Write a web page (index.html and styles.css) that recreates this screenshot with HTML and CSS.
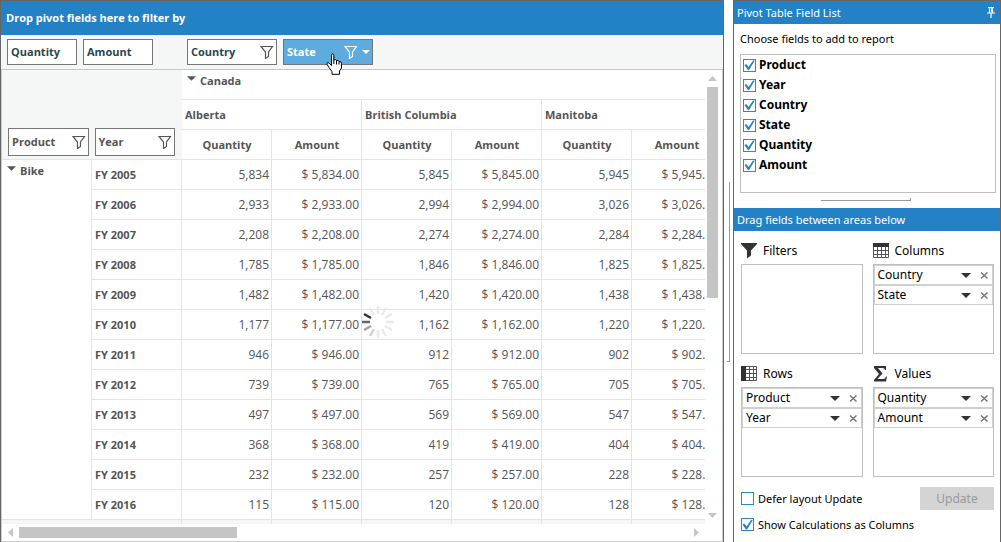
FILE: index.html
```html
<!DOCTYPE html>
<html lang="en">
<head>
<meta charset="utf-8">
<title>Pivot Table</title>
<link rel="stylesheet" href="styles.css">
</head>
<body>
<svg class="defs" aria-hidden="true">
  <symbol id="i-filter" viewBox="0 0 14 14"><path d="M1 1.500h11.500L8.500 7v4.500L5.500 13.500V7z" fill="none" stroke="currentColor" stroke-width="1.200"/></symbol>
  <symbol id="i-x" viewBox="0 0 9 9"><path d="M1 1.500L7.500 7.500M7.500 1.500L1 7.500" fill="none" stroke="currentColor" stroke-width="1.500"/></symbol>
  <symbol id="i-down" viewBox="0 0 10 5"><path d="M0 0h10L5 5z" fill="currentColor"/></symbol>
</svg>
<main class="app">
  <section class="pivot">
    <h1 class="filter-bar">Drop pivot fields here to filter by</h1>
    <div class="field-bar">
      <div class="chips values">
        <button class="chip small">Quantity</button>
        <button class="chip small">Amount</button>
      </div>
      <div class="chips">
        <button class="chip wide">Country<svg class="funnel"><use href="#i-filter"/></svg></button>
        <button class="chip wide active">State<svg class="funnel"><use href="#i-filter"/></svg><svg class="caret"><use href="#i-down"/></svg></button>
      </div>
      <svg class="cursor" viewBox="0 0 17 22"><path d="M5.500 12.500V2.500Q5.500 .8 6.500 .8T7.800 2.500V7Q10 6 10.500 7.500Q12.500 6.800 13 8.500Q15.500 8 15.500 10.500V15L13.500 18V21.300H6V18.500L3 14.500L.8 11Q1 8.800 3 10z" fill="#fff" stroke="#000"/><path d="M7.800 7v4M10.500 7.500v4M13 8.500v3" stroke="#000"/></svg>
    </div>
    <div class="grid">
      <div class="viewport">
        <table class="table" id="pivot-table">
          <thead>
            <tr>
              <th class="corner" rowspan="3" colspan="2">
                <div class="chips">
                  <button class="chip">Product<svg class="funnel"><use href="#i-filter"/></svg></button>
                  <button class="chip">Year<svg class="funnel"><use href="#i-filter"/></svg></button>
                </div>
              </th>
              <th class="group" colspan="6"><svg class="expander"><use href="#i-down"/></svg>Canada</th>
            </tr>
            <tr class="states"><th colspan="2">Alberta</th><th colspan="2">British Columbia</th><th colspan="2">Manitoba</th></tr>
            <tr class="measures"><th>Quantity</th><th>Amount</th><th>Quantity</th><th>Amount</th><th>Quantity</th><th>Amount</th></tr>
          </thead>
          <tbody>
            <tr><th class="group" rowspan="12"><svg class="expander"><use href="#i-down"/></svg>Bike</th><th>FY 2005</th><td>5,834</td><td>$ 5,834.00</td><td>5,845</td><td>$ 5,845.00</td><td>5,945</td><td>$ 5,945.00</td></tr>
            <tr><th>FY 2006</th><td>2,933</td><td>$ 2,933.00</td><td>2,994</td><td>$ 2,994.00</td><td>3,026</td><td>$ 3,026.00</td></tr>
            <tr><th>FY 2007</th><td>2,208</td><td>$ 2,208.00</td><td>2,274</td><td>$ 2,274.00</td><td>2,284</td><td>$ 2,284.00</td></tr>
            <tr><th>FY 2008</th><td>1,785</td><td>$ 1,785.00</td><td>1,846</td><td>$ 1,846.00</td><td>1,825</td><td>$ 1,825.00</td></tr>
            <tr><th>FY 2009</th><td>1,482</td><td>$ 1,482.00</td><td>1,420</td><td>$ 1,420.00</td><td>1,438</td><td>$ 1,438.00</td></tr>
            <tr><th>FY 2010</th><td>1,177</td><td>$ 1,177.00</td><td>1,162</td><td>$ 1,162.00</td><td>1,220</td><td>$ 1,220.00</td></tr>
            <tr><th>FY 2011</th><td>946</td><td>$ 946.00</td><td>912</td><td>$ 912.00</td><td>902</td><td>$ 902.00</td></tr>
            <tr><th>FY 2012</th><td>739</td><td>$ 739.00</td><td>765</td><td>$ 765.00</td><td>705</td><td>$ 705.00</td></tr>
            <tr><th>FY 2013</th><td>497</td><td>$ 497.00</td><td>569</td><td>$ 569.00</td><td>547</td><td>$ 547.00</td></tr>
            <tr><th>FY 2014</th><td>368</td><td>$ 368.00</td><td>419</td><td>$ 419.00</td><td>404</td><td>$ 404.00</td></tr>
            <tr><th>FY 2015</th><td>232</td><td>$ 232.00</td><td>257</td><td>$ 257.00</td><td>228</td><td>$ 228.00</td></tr>
            <tr><th>FY 2016</th><td>115</td><td>$ 115.00</td><td>120</td><td>$ 120.00</td><td>128</td><td>$ 128.00</td></tr>
          </tbody>
          <tfoot><tr><td colspan="2"></td><td></td><td></td><td></td><td></td><td></td><td></td></tr></tfoot>
        </table>
      </div>
      <div class="vscroll"><svg class="arrow-v" viewBox="0 0 9 5"><path d="M0 5L4.500 0L9 5z"/></svg><div class="vthumb"></div><svg class="arrow-v end" viewBox="0 0 9 5"><path d="M0 0h9L4.500 5z"/></svg></div>
      <div class="hscroll"><svg class="arrow-h" viewBox="0 0 5 9"><path d="M5 0v9L0 4.500z"/></svg><div class="hthumb"></div><svg class="arrow-h end" viewBox="0 0 5 9"><path d="M0 0v9L5 4.500z"/></svg></div>
      <svg class="spinner" viewBox="-16 -16 32 32" stroke="#ebebeb" stroke-width="2.500">
        <path d="M0-8v-8M4-7l4-7M7-4l7-4M8 0h8M7 4l7 4M4 7l4 7M0 8v8"/>
        <path d="M-4 7l-4 7" stroke="#d0d0d0"/><path d="M-7 4l-7 4" stroke="#a0a0a0"/><path d="M-8 0h-8" stroke="#666"/><path d="M-7-4l-7-4" stroke="#333"/><path d="M-4-7l-4-7"/>
      </svg>
    </div>
  </section>
  <div class="splitter"></div>
  <aside class="panel">
    <h2 class="title">Pivot Table Field List<svg class="pin" viewBox="0 0 8 11"><path d="M1 .5h6M2.500 .5v5M5.500 .5v5M4.700 1v4M0 6h8M4 6v5" fill="none" stroke="#fff" stroke-width="1.200"/></svg></h2>
    <div class="choose">
      <p class="hint">Choose fields to add to report</p>
      <div class="fields">
        <label><input type="checkbox" checked>Product</label>
        <label><input type="checkbox" checked>Year</label>
        <label><input type="checkbox" checked>Country</label>
        <label><input type="checkbox" checked>State</label>
        <label><input type="checkbox" checked>Quantity</label>
        <label><input type="checkbox" checked>Amount</label>
      </div>
      <div class="handle"></div>
    </div>
    <h2 class="title">Drag fields between areas below</h2>
    <div class="areas">
      <section class="area">
        <h3><svg viewBox="0 0 16 16"><path d="M0 0h16v1L10 7.500v5L6 15.500V7.500L0 1z" fill="#333"/></svg>Filters</h3>
        <div class="drop"></div>
      </section>
      <section class="area">
        <h3><svg viewBox="0 0 16 16"><path d="M.5 .5h15v14H.5zM.5 7.500h15M.5 11.500h15M4.500 4v11M8.500 4v11M12.500 4v11" fill="none" stroke="#555"/><path d="M0 0h16v4H0z" fill="#333"/></svg>Columns</h3>
        <div class="drop">
          <div class="item">Country<button aria-label="Sort"><svg class="caret"><use href="#i-down"/></svg></button><button aria-label="Remove"><svg class="x"><use href="#i-x"/></svg></button></div>
          <div class="item">State<button aria-label="Sort"><svg class="caret"><use href="#i-down"/></svg></button><button aria-label="Remove"><svg class="x"><use href="#i-x"/></svg></button></div>
        </div>
      </section>
      <section class="area">
        <h3><svg viewBox="0 0 16 16"><path d="M.5 .5h15v14H.5zM8.500 0v15M12.500 0v15M5 3.500h11M5 7.500h11M5 11.500h11" fill="none" stroke="#555"/><path d="M0 0h5v15H0z" fill="#333"/></svg>Rows</h3>
        <div class="drop">
          <div class="item">Product<button aria-label="Sort"><svg class="caret"><use href="#i-down"/></svg></button><button aria-label="Remove"><svg class="x"><use href="#i-x"/></svg></button></div>
          <div class="item">Year<button aria-label="Sort"><svg class="caret"><use href="#i-down"/></svg></button><button aria-label="Remove"><svg class="x"><use href="#i-x"/></svg></button></div>
        </div>
      </section>
      <section class="area">
        <h3><svg viewBox="0 0 16 16"><path d="M1 0h12v4h-1Q11.500 2 9.500 2H5l4.500 5.500L4.500 13H10q2.500 0 3-2.500h1L13 15.500H1V14l5-6L1 2z" fill="#333"/></svg>Values</h3>
        <div class="drop">
          <div class="item">Quantity<button aria-label="Sort"><svg class="caret"><use href="#i-down"/></svg></button><button aria-label="Remove"><svg class="x"><use href="#i-x"/></svg></button></div>
          <div class="item">Amount<button aria-label="Sort"><svg class="caret"><use href="#i-down"/></svg></button><button aria-label="Remove"><svg class="x"><use href="#i-x"/></svg></button></div>
        </div>
      </section>
    </div>
    <div class="options">
      <label><input type="checkbox">Defer layout Update</label>
      <button class="update" disabled>Update</button>
    </div>
    <div class="options last">
      <label><input type="checkbox" checked>Show Calculations as Columns</label>
    </div>
  </aside>
</main>
</body>
</html>
```
FILE: styles.css
```css
* { box-sizing: border-box; }
body { margin: 0; background: #fff; color: #000; font: 12px/16px "Noto Sans", "Open Sans", sans-serif; }
h1, h2, h3, p { margin: 0; font-size: inherit; font-weight: inherit; }
button { font: inherit; color: inherit; border: 0; padding: 0; background: none; }
svg { display: block; flex: none; }
.defs { position: absolute; width: 0; height: 0; }
.app { display: flex; align-items: stretch; min-height: 100vh; }

.pivot { flex: 1; min-width: 0; display: flex; flex-direction: column; border: 1px solid #666; color: #555; font-size: 11px; font-weight: 700; font-family: "Open Sans", sans-serif; }
.filter-bar { padding: 9px 5px; background: #2382c6; color: #fff; }
.field-bar { position: relative; display: flex; padding: 4px 6px; border-bottom: 1px solid #c6c6c6; background: #f5f7f7; color: #2c4650; }
.chips { display: flex; gap: 6px; }
.values { width: 180px; }
.chip { display: flex; align-items: center; width: 81px; height: 28px; padding: 0 2px 0 3px; border: 1px solid #777; background: #fff; text-align: left; }
.chip.small { width: 70px; height: 26px; }
.chip.wide { width: 90px; height: 26px; }
.chip.active { background: #5dabdf; color: #fff; }
.funnel { width: 14px; height: 14px; margin-left: auto; color: #555; }
.active .funnel { color: #fff; }
.chip .caret { width: 8px; height: 4px; margin-left: 4px; }
.cursor { position: absolute; left: 325px; top: 18px; width: 17px; height: 22px; }

.grid { position: relative; flex: 1; display: grid; grid-template-columns: minmax(0, 1fr) 17px; border-left: 1px solid #ccc; border-right: 1px solid #ccc; border-bottom: 1px solid #ccc; }
.viewport { overflow: hidden; }
.table { width: 720px; table-layout: fixed; border-spacing: 0; }
.table th, .table td { height: 30px; padding: 0 2px 0 3px; border-right: 1px solid #e4e4e4; border-bottom: 1px solid #e4e4e4; text-align: left; white-space: nowrap; }
.table td { text-align: right; font-size: 12px; font-weight: 400; }
.table .corner { padding: 0 6px 3px; background: #f5f7f7; border-right-color: #f5f7f7; vertical-align: bottom; }
.table .group { padding: 3px 5px 0; vertical-align: top; }
.expander { display: inline-block; width: 9px; height: 5px; margin-right: 4px; vertical-align: 4px; }
.table .measures th { text-align: center; }
.table tfoot td { height: 4px; border-bottom: 0; background: #f5f7f7; }
.vscroll { display: flex; flex-direction: column; align-items: center; padding: 6px 4px 6px 2px; }
.vscroll svg, .hscroll svg { fill: #c5c5c5; }
.arrow-v { width: 9px; height: 5px; }
.vthumb { width: 11px; height: 211px; margin-top: 6px; background: #c5c5c5; }
.arrow-v.end { margin-top: auto; }
.hscroll { display: flex; align-items: center; padding: 3px 6px; height: 17px; }
.arrow-h { width: 5px; height: 9px; }
.hthumb { width: 218px; height: 11px; margin-left: 6px; background: #c5c5c5; }
.arrow-h.end { margin-left: auto; }
.spinner { position: absolute; left: 50%; top: 236px; width: 32px; height: 32px; }

.splitter { align-self: center; width: 3px; height: 180px; margin: 0 3px; border: solid #999; border-width: 0 1px 1px 0; }

.panel { width: 268px; flex: none; border: 1px solid #666; }
.title { display: flex; align-items: center; justify-content: space-between; height: 23px; padding: 0 5px 0 3px; background: #2382c6; color: #fff; font-size: 11px; }
.pin { width: 8px; height: 11px; }
.choose { padding: 7px 4px 7px 6px; }
.hint { font-size: 11px; }
.fields { height: 139px; margin-top: 7px; padding: 0 2px; border: 1px solid #c0c0c0; font-weight: 700; }
.fields label { display: flex; align-items: center; gap: 3px; height: 20px; }
input[type="checkbox"] { appearance: none; display: grid; flex: none; width: 13px; height: 13px; margin: 0; border: 1px solid #2e87c8; background: #fff; }
input:checked::before { content: ""; background: #2382c6; clip-path: polygon(5% 50%, 20% 42%, 42% 68%, 82% 8%, 98% 8%, 46% 96%, 36% 96%); }
.handle { width: 90px; height: 3px; margin: 5px 0 0 81px; border-right: 1px solid #999; border-bottom: 1px solid #999; }
.areas { display: grid; grid-template-columns: 1fr 1fr; gap: 10px; padding: 10px 6px 0 7px; }
.area h3 { display: flex; align-items: center; gap: 6px; height: 20px; }
.area h3 svg { width: 16px; height: 16px; }
.drop { height: 90px; margin-top: 3px; border: 1px solid #c0c0c0; }
.item { display: flex; align-items: center; height: 20px; padding: 0 3px; border: 1px solid #d0d0d0; }
.item button:first-of-type { margin-left: auto; margin-right: 9px; }
.item .caret { width: 10px; height: 5px; color: #333; }
.item .x { width: 9px; height: 9px; color: #777; }
.options { display: flex; align-items: center; justify-content: space-between; height: 23px; margin: 10px 6px 0 7px; font-size: 11px; }
.options label { display: flex; align-items: center; gap: 4px; }
.update { width: 74px; height: 23px; background: #d4d4d4; color: #999; font-size: 12px; }
.last { margin-top: 3px; }
```
